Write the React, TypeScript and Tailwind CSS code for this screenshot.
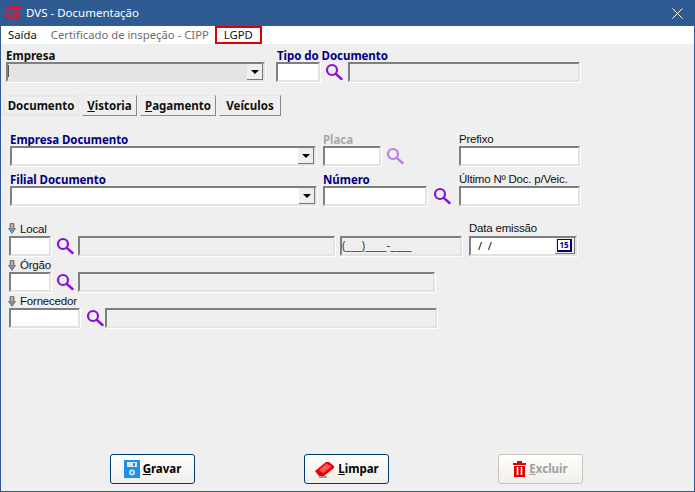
import React from "react";

const FONT = "font-['Noto_Sans',sans-serif]";

function Search({ faded = false }: { faded?: boolean }) {
  return (
    <svg width="18" height="18" viewBox="0 0 18 18" fill="none" className={faded ? "opacity-50 shrink-0" : "shrink-0"}>
      <circle cx="7" cy="7" r="5" stroke="#8a10d8" strokeWidth="2.2" />
      <path d="M10.8 10.8 L16.5 16" stroke="#8a10d8" strokeWidth="2.4" strokeLinecap="round" />
    </svg>
  );
}

function Arrow() {
  return (
    <svg width="8" height="11" viewBox="0 0 8 11" className="shrink-0">
      <path d="M2 0.5h4v5h1.5L4 10.5 0.5 5.5H2z" fill="#6f93c8" stroke="#6b6257" strokeWidth="0.7" />
      <path d="M3 1h2v4H3z" fill="#e9a55c" />
    </svg>
  );
}

const sunken =
  "border-2 border-t-[#7f7f7f] border-l-[#7f7f7f] border-b-[#e3e3e3] border-r-[#e3e3e3] shadow-[1px_1px_0_#ffffff] h-[20px] box-border shrink-0";

function Combo({ className, disabled = false }: { className: string; disabled?: boolean }) {
  return (
    <div className={`${sunken} ${className} ${disabled ? "bg-[#e4e4e4]" : "bg-white"} flex justify-end items-stretch`}>
      {disabled && <div className="w-px h-[12px] mt-[1px] bg-[#555555] mr-auto" />}
      <div className="w-[16px] bg-[#efefef] border-r border-b border-r-[#777777] border-b-[#777777] flex items-center justify-center">
        <div className="w-0 h-0 border-l-[4px] border-r-[4px] border-t-[4px] border-l-transparent border-r-transparent border-t-black" />
      </div>
    </div>
  );
}

function Field({ className, white = true, children }: { className: string; white?: boolean; children?: React.ReactNode }) {
  return <div className={`${sunken} ${className} ${white ? "bg-white" : "bg-[#efefef]"}`}>{children}</div>;
}

function Tab({ label, u, className }: { label: string; u?: boolean; className: string }) {
  return (
    <div className={`h-[21px] box-border flex items-center justify-center bg-[#efefef] border border-[#8a8a8a] border-t-[#e8e8e8] border-l-[#e8e8e8] text-[11.5px] font-bold text-[#111111] ${className}`}>
      {u ? <><span className="underline">{label[0]}</span>{label.slice(1)}</> : label}
    </div>
  );
}

function Btn({ label, icon, disabled = false }: { label: string; icon: React.ReactNode; disabled?: boolean }) {
  return (
    <div className={`w-[85px] h-[30px] box-border rounded-[3px] border bg-gradient-to-b from-white to-[#f1eeea] flex items-center justify-center gap-[3px] text-[11.5px] font-bold ${disabled ? "border-[#cbc7b8] text-[#a0a0a0]" : "border-[#003c74] text-black"}`}>
      {icon}
      <span><span className="underline">{label[0]}</span>{label.slice(1)}</span>
    </div>
  );
}

const navy = "text-[11.5px] leading-[12px] font-bold tracking-[-0.05px] text-[#000080]";
const plain = "font-['Liberation_Sans',sans-serif] text-[11.5px] leading-[10px] pb-[2px] tracking-[-0.2px] text-[#111111]";

export default function App() {
  return (
    <div className={`w-[695px] h-[492px] box-border flex flex-col overflow-hidden bg-[#efefef] border-l border-r border-b border-[#2f5b92] ${FONT}`}>
      <div className="h-[26px] shrink-0 bg-[#2f5b92] flex items-center pl-[3px] pr-[11px] text-white text-[11.5px]">
        <svg width="19" height="16" viewBox="0 0 19 16" className="shrink-0">
          <path d="M18 1 H8 A7 7 0 0 0 8 15 H14 L16 6.5 H8 L7.2 9.5 H11 L10.4 12 H8 A4 4 0 0 1 8 4 H17 Z" fill="#c9213a" />
        </svg>
        <span className="ml-[3px]">DVS - Documentação</span>
        <svg width="11" height="11" viewBox="0 0 11 11" className="ml-auto">
          <path d="M0.5 0.5 L10.5 10.5 M10.5 0.5 L0.5 10.5" stroke="#ffffff" strokeWidth="1" />
        </svg>
      </div>

      <div className="h-[18px] shrink-0 bg-white flex items-center text-[11.3px]">
        <span className="ml-[7px] text-[#111111]">Saída</span>
        <span className="ml-[14px] text-[#6d6d6d]">Certificado de inspeção - CIPP</span>
        <span className="ml-[6px] w-[47px] h-[18px] box-border border-2 border-[#e00000] flex items-center justify-center text-[#111111]">LGPD</span>
      </div>

      <div className="flex ml-[5px] mt-[6px] h-[33px]">
        <div className="w-[270px] flex flex-col">
          <div className="text-[11.5px] leading-[12px] font-bold text-[#111111]">Empresa</div>
          <Combo className="w-[259px]" disabled />
        </div>
        <div className="flex flex-col">
          <div className={`${navy} ml-[1px]`}>Tipo do Documento</div>
          <div className="flex items-center">
            <Field className="w-[44px]" />
            <div className="ml-[5px] w-[18px]"><Search /></div>
            <Field className="w-[232px] ml-[5px]" white={false} />
          </div>
        </div>
      </div>

      <div className="flex gap-[3px] ml-[2px] mt-[12px]">
        <Tab label="Documento" className="w-[76px] border-[#e8e8e8] border-2" />
        <Tab label="Vistoria" u className="w-[55px]" />
        <Tab label="Pagamento" u className="w-[76px]" />
        <Tab label="Veículos" className="w-[62px]" />
      </div>

      <div className="flex ml-[9px] mt-[18px]">
        <div className="w-[313px] flex flex-col">
          <div className={navy}>Empresa Documento</div>
          <Combo className="w-[306px]" />
        </div>
        <div className="w-[136px] flex flex-col">
          <div className={`${navy} opacity-30 !text-black`}>Placa</div>
          <div className="flex items-center">
            <Field className="w-[58px]" />
            <div className="ml-[5px]"><Search faded /></div>
          </div>
        </div>
        <div className="flex flex-col">
          <div className={plain}>Prefixo</div>
          <Field className="w-[121px]" />
        </div>
      </div>

      <div className="flex ml-[9px] mt-[8px]">
        <div className="w-[313px] flex flex-col">
          <div className={navy}>Filial Documento</div>
          <Combo className="w-[307px]" />
        </div>
        <div className="w-[136px] flex flex-col">
          <div className={navy}>Número</div>
          <div className="flex items-center">
            <Field className="w-[104px]" />
            <div className="ml-[6px]"><Search /></div>
          </div>
        </div>
        <div className="flex flex-col">
          <div className={plain}>Último Nº Doc. p/Veic.</div>
          <Field className="w-[121px]" />
        </div>
      </div>

      <div className="flex ml-[6px] mt-[17px] items-end">
        <div className="flex flex-col">
          <div className={`${plain} flex items-center gap-[4px] ml-[1px] h-[13px]`}><Arrow />Local</div>
          <div className="flex items-center ml-[2px]">
            <Field className="w-[42px]" />
            <div className="ml-[5px] w-[18px]"><Search /></div>
            <Field className="w-[257px] ml-[4px]" white={false} />
            <Field className="w-[122px] ml-[5px] text-[12px] leading-[16px] text-[#444444] overflow-hidden" white={false}>(___)____-____</Field>
          </div>
        </div>
        <div className="flex flex-col ml-[7px]">
          <div className={`${plain} h-[13px]`}>Data emissão</div>
          <div className={`${sunken} w-[108px] bg-white flex justify-between items-stretch`}>
            <span className="ml-[7px] text-[11px] leading-[15px] text-black">/ &nbsp;/</span>
            <div className="w-[20px] bg-[#efefef] border-r border-b border-r-[#777777] border-b-[#777777] flex items-center justify-center">
              <span className="text-[8px] leading-[10px] font-bold text-[#000080] border-t border-r-2 border-b-2 border-l border-[#000080] px-px bg-white">15</span>
            </div>
          </div>
        </div>
      </div>

      <div className="flex flex-col ml-[6px] mt-[4px]">
        <div className={`${plain} flex items-center gap-[4px] ml-[1px] h-[12px]`}><Arrow />Órgão</div>
        <div className="flex items-center ml-[2px]">
          <Field className="w-[42px]" />
          <div className="ml-[5px] w-[18px]"><Search /></div>
          <Field className="w-[357px] ml-[4px]" white={false} />
        </div>
      </div>

      <div className="flex flex-col ml-[6px] mt-[4px]">
        <div className={`${plain} flex items-center gap-[4px] ml-[1px] h-[12px]`}><Arrow />Fornecedor</div>
        <div className="flex items-center ml-[2px]">
          <Field className="w-[71px]" />
          <div className="ml-[6px] w-[18px]"><Search /></div>
          <Field className="w-[332px] ml-[1px]" white={false} />
        </div>
      </div>

      <div className="flex mt-auto mb-[7px] ml-[109px] gap-[109px]">
        <Btn
          label="Gravar"
          icon={
            <svg width="16" height="18" viewBox="0 0 16 18">
              <path d="M0 0h16v18H0z" fill="#1e90e8" />
              <rect x="3" y="2" width="10" height="5" fill="#cfe8fb" />
              <rect x="9" y="3" width="2" height="3" fill="#1e90e8" />
              <circle cx="8" cy="12.5" r="3" fill="#cfe8fb" />
              <circle cx="8" cy="12.5" r="1.2" fill="#1e90e8" />
            </svg>
          }
        />
        <Btn
          label="Limpar"
          icon={
            <svg width="21" height="17" viewBox="0 0 21 17">
              <path d="M1 10 L12 1 H15 L20 5 L20 7 L10 15 H5 Z" fill="#ee0000" />
              <path d="M12.5 2.5 L17.5 5.5 L9 12 L5 9 Z" fill="#ff5a5a" />
              <path d="M5 16 H13" stroke="#444444" strokeWidth="1" />
            </svg>
          }
        />
        <Btn
          label="Excluir"
          disabled
          icon={
            <svg width="13" height="16" viewBox="0 0 13 16">
              <path d="M0 2h4V0h5v2h4v2H0z" fill="#e00000" />
              <path d="M1 5h11v11H1z" fill="#e00000" />
              <path d="M4.5 6v8M8.5 6v8" stroke="#ffffff" strokeWidth="1.6" />
            </svg>
          }
        />
      </div>
    </div>
  );
}
